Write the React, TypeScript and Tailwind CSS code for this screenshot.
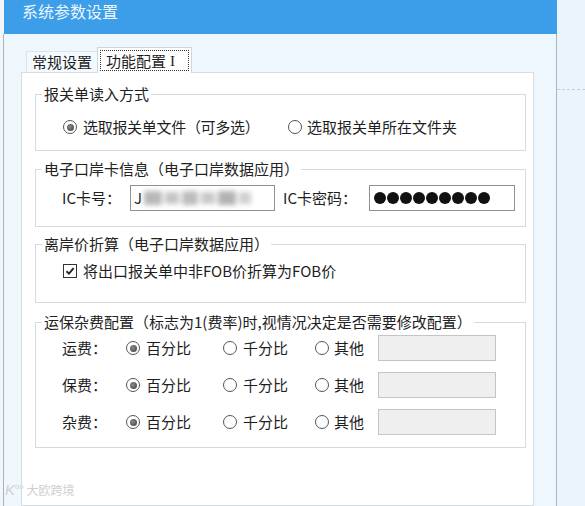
import React from 'react'

// 系统参数设置 — 「功能配置Ⅰ」页：报关单读入方式 / 电子口岸卡 / 离岸价折算 / 运保杂费配置

type FeeRow = { label: string; value: 'pct' | 'permil' | 'other' }

const FEE_ROWS: FeeRow[] = [
  { label: '运费：', value: 'pct' },
  { label: '保费：', value: 'pct' },
  { label: '杂费：', value: 'pct' },
]

function Radio({ checked }: { checked?: boolean }) {
  return (
    <span className="w-[14px] h-[14px] shrink-0 rounded-full border border-[#555] bg-white grid place-items-center">
      {checked ? <span className="w-[7px] h-[7px] rounded-full bg-[radial-gradient(circle_at_40%_40%,#8a8a8a,#3a3a3a)]" /> : null}
    </span>
  )
}

function Checkbox({ checked }: { checked?: boolean }) {
  return (
    <span className="w-[14px] h-[14px] shrink-0 border border-[#333] bg-white grid place-items-center">
      {checked ? (
        <svg width="10" height="10" viewBox="0 0 10 10">
          <path d="M1.5 5.2 L4 7.6 L8.6 2.2" fill="none" stroke="#222" strokeWidth="1.9" />
        </svg>
      ) : null}
    </span>
  )
}

function Group({ title, className, inner, children }: { title: string; className?: string; inner?: string; children: React.ReactNode }) {
  return (
    <fieldset className={`border border-[#d6dadd] ${className ?? ''}`}>
      <legend className="ml-[6px] px-[2px] leading-[20px] text-[#222]">{title}</legend>
      <div className={inner ?? 'pl-[27px]'}>{children}</div>
    </fieldset>
  )
}

export default function App() {
  const [readMode, setReadMode] = React.useState<'files' | 'folder'>('files')
  const [fobConvert, setFobConvert] = React.useState(true)

  return (
    <div className="w-[585px] h-[506px] overflow-hidden flex bg-[#e9f4fb] text-[15px] text-[#1e1e1e] font-['Noto_Sans_CJK_SC','Noto_Sans',sans-serif] relative">
      {/* 左侧窄边 */}
      <div className="w-[4px] shrink-0 flex flex-col">
        <div className="h-[34px] bg-[#f3f6f8]" />
        <div className="flex-1 bg-[#f3f6f8] border-r border-[#a7b3bd]" />
      </div>

      {/* 对话框 */}
      <div className="w-[553px] shrink-0 flex flex-col">
        <div className="h-[34px] bg-[#3c9ee8] pl-[18px] pt-[1px]">
          <span className="text-[16px] leading-[20px] text-[#eef6fd]">系统参数设置</span>
        </div>

        <div className="flex-1 bg-[#eef7fd] border-r border-[#a9b4bd] pt-[13px] flex flex-col">
          {/* 页签 */}
          <div className="ml-[22px] flex items-end relative z-10">
            <div className="w-[71px] h-[21px] border-t border-l border-[#dde4ea] bg-[#f4f9fd] flex items-center pl-[5px] leading-[20px]">
              常规设置
            </div>
            <div className="w-[95px] h-[26px] -mb-px bg-white border-t border-l border-r border-[#cfd6dc] p-[2px] flex">
              <span className="flex-1 border border-dotted border-[#333] flex items-center pl-[5px] leading-[20px]">
                功能配置<span className="ml-[4px] font-['Liberation_Serif',serif]">I</span>
              </span>
            </div>
          </div>

          {/* 页面 */}
          <div className="ml-[17px] w-[513px] flex-1 bg-white border border-[#d5dce2] pl-[13px] pr-[7px] pt-[11px]">
            <Group title="报关单读入方式" className="pt-[13px] pb-[13px]">
              <div className="h-[20px] flex items-center">
                <button type="button" onClick={() => setReadMode('files')} className="w-[225px] flex items-center gap-[6px]">
                  <Radio checked={readMode === 'files'} />
                  <span className="leading-[20px] tracking-[-0.3px]">选取报关单文件（可多选）</span>
                </button>
                <button type="button" onClick={() => setReadMode('folder')} className="flex items-center gap-[5px]">
                  <Radio checked={readMode === 'folder'} />
                  <span className="leading-[20px]">选取报关单所在文件夹</span>
                </button>
              </div>
            </Group>

            <Group title="电子口岸卡信息（电子口岸数据应用）" className="mt-[8px] pt-[6px] pb-[15px]" inner="pl-[26px]">
              <div className="h-[26px] flex items-center">
                <span className="w-[68px] leading-[20px]">IC卡号：</span>
                <div className="w-[145px] h-[26px] border border-[#909090] bg-white flex items-center pl-[3px] overflow-hidden">
                  <span className="leading-[20px]">J</span>
                  <span className="ml-[2px] flex items-center gap-[3px] blur-[2.5px]">
                    <span className="w-[18px] h-[14px] bg-[#b8b8b8]" />
                    <span className="w-[14px] h-[12px] bg-[#c4c4c4]" />
                    <span className="w-[16px] h-[14px] bg-[#bdbdbd]" />
                    <span className="w-[14px] h-[12px] bg-[#c8c8c8]" />
                    <span className="w-[18px] h-[14px] bg-[#b2b2b2]" />
                    <span className="w-[12px] h-[12px] bg-[#d0d0d0]" />
                  </span>
                </div>
                <span className="ml-[8px] w-[86px] leading-[20px]">IC卡密码：</span>
                <div className="w-[146px] h-[26px] border border-[#909090] bg-white flex items-center pl-[4px] gap-[1px]">
                  {Array.from({ length: 9 }).map((_, i) => (
                    <span key={i} className="w-[12px] h-[12px] rounded-full bg-[#111]" />
                  ))}
                </div>
              </div>
            </Group>

            <Group title="离岸价折算（电子口岸数据应用）" className="mt-[7px] pt-[7px] pb-[21px]">
              <button type="button" onClick={() => setFobConvert((v) => !v)} className="h-[20px] flex items-center gap-[6px]">
                <Checkbox checked={fobConvert} />
                <span className="leading-[20px]">将出口报关单中非FOB价折算为FOB价</span>
              </button>
            </Group>

            <Group title="运保杂费配置（标志为1(费率)时,视情况决定是否需要修改配置）" className="mt-[9px] pt-[3px] pb-[12px]" inner="pl-[26px]">
              <div className="flex flex-col gap-[11px]">
                {FEE_ROWS.map((r) => (
                  <div key={r.label} className="h-[26px] grid grid-cols-[64px_97px_92px_63px_118px] items-center">
                    <span className="leading-[20px]">{r.label}</span>
                    <span className="flex items-center gap-[6px]">
                      <Radio checked={r.value === 'pct'} />
                      <span className="leading-[20px]">百分比</span>
                    </span>
                    <span className="flex items-center gap-[6px]">
                      <Radio checked={r.value === 'permil'} />
                      <span className="leading-[20px]">千分比</span>
                    </span>
                    <span className="flex items-center gap-[5px]">
                      <Radio checked={r.value === 'other'} />
                      <span className="leading-[20px]">其他</span>
                    </span>
                    <div className="h-[26px] border border-[#c4c4c4] bg-[#efefef]" />
                  </div>
                ))}
              </div>
            </Group>
          </div>
        </div>
      </div>

      {/* 右侧背景 */}
      <div className="flex-1 flex flex-col">
        <div className="h-[89px]" />
        <div className="border-t border-dashed border-[#c5ced6]" />
        <div className="flex-1" />
      </div>

      {/* 水印 */}
      <div className="absolute left-[5px] top-[482px] flex items-center gap-[3px] text-[#cfcfcf] [text-shadow:0_0_1px_#fff]">
        <span className="text-[15px] leading-[16px] font-['Liberation_Sans',sans-serif] italic">K</span>
        <span className="text-[7px] leading-[8px] -mt-[8px] -ml-[3px]">oo</span>
        <span className="text-[12px] leading-[16px]">大欧跨境</span>
      </div>
    </div>
  )
}
